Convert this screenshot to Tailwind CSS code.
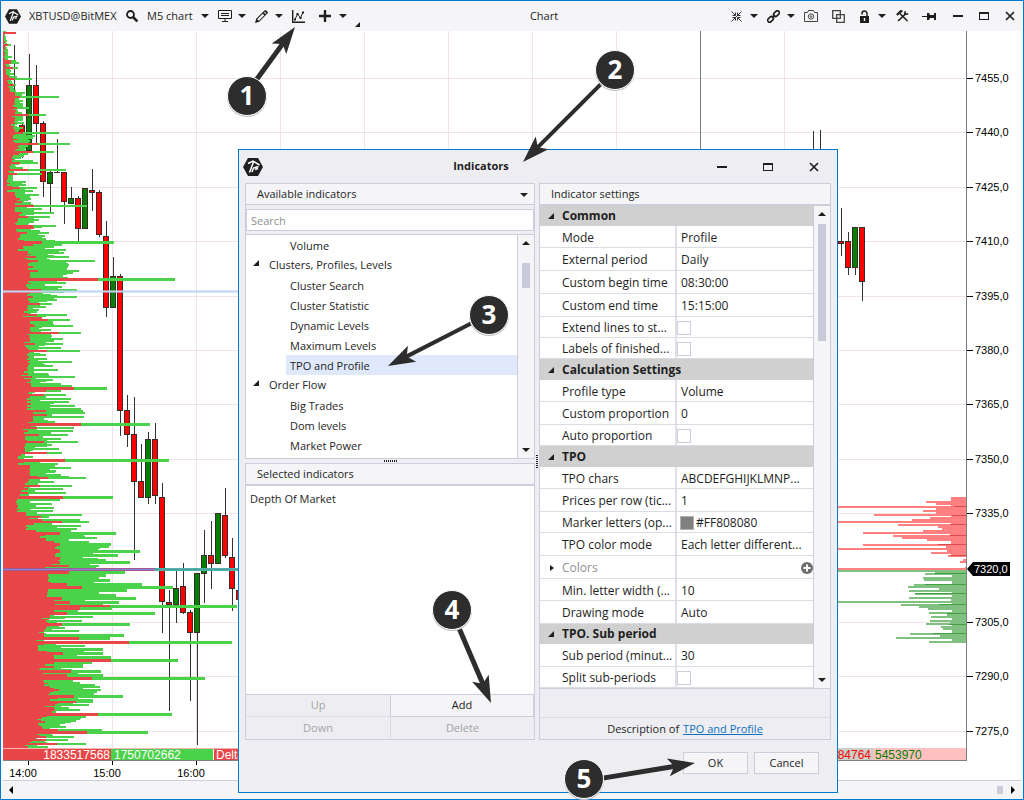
<!DOCTYPE html>
<html lang="en">
<head>
<meta charset="utf-8">
<title>XBTUSD@BitMEX Chart</title>
<script src="https://cdn.jsdelivr.net/npm/@tailwindcss/browser@4"></script>
</head>
<body class="font-['Open_Sans','Noto_Sans',sans-serif] text-[11px] text-[#1e1e1e]">
<svg class="hidden" aria-hidden="true">
  <symbol id="caret" viewBox="0 0 8 4"><path d="M0 0h8L4 4z" fill="currentColor"/></symbol>
  <symbol id="open" viewBox="0 0 6 6"><path d="M6 0v6H0z" fill="currentColor"/></symbol>
  <symbol id="logo" viewBox="0 0 20 18"><path d="M5 0h10l5 9-5 9H5L0 9z" fill="#1e1e1e"/><path d="M5 5.500 10 3l6.500 4M10.500 4 6.500 14.500M15.500 8.500l-5 1.500-1.500 4M15 10.500l-3 1" fill="none" stroke="#fff" stroke-width="1.500"/></symbol>
  <symbol id="min" viewBox="0 0 12 12"><path d="M1 5h10v2H1z" fill="currentColor"/></symbol>
  <symbol id="max" viewBox="0 0 12 12"><path d="M1 2h10v8H1zM2 4v5h8V4z" fill="currentColor" fill-rule="evenodd"/></symbol>
  <symbol id="close" viewBox="0 0 12 12"><path d="m2 2 8 8M10 2l-8 8" stroke="currentColor" stroke-width="1.700"/></symbol>
</svg>

<div class="relative flex min-h-screen flex-col border border-[#007acc] bg-[#f5f5f7]">
  <header class="flex h-[30px] items-center text-xs">
    <svg class="ml-1 h-[15px] w-4 shrink-0"><use href="#logo"/></svg>
    <span class="ml-2 w-[95px] text-[11px] whitespace-nowrap">XBTUSD@BitMEX</span>
    <button aria-label="Search instrument" class="flex w-4 justify-center"><svg class="size-3" viewBox="0 0 12 12" fill="none" stroke="currentColor"><circle cx="4.500" cy="4.500" r="3.500" stroke-width="1.800"/><path d="m7 7 4.500 4.500" stroke-width="2.600"/></svg></button>
    <button class="ml-[7px] w-12 text-left text-[11px] whitespace-nowrap">M5 chart</button>
    <button aria-label="Timeframe menu" class="flex w-5 justify-center"><svg class="h-1 w-2"><use href="#caret"/></svg></button>
    <button aria-label="Display" class="flex w-5 justify-center"><svg class="h-3 w-3.5" viewBox="0 0 14 12" fill="none" stroke="currentColor"><path d="M.5.5h13v8H.5zM3 3.500h8M3 5.500h8M7 9v2.500M4 11.500h6"/></svg></button>
    <button aria-label="Display menu" class="flex w-3.5 justify-center"><svg class="h-1 w-2"><use href="#caret"/></svg></button>
    <button aria-label="Draw" class="flex w-6 justify-center"><svg class="size-[13px]" viewBox="0 0 13 13"><path d="M0 13 1.200 8.800 9.500.5Q10.500-.3 11.600.8l.8.8q.9 1 0 2L4.200 11.800zM2.200 9.200l1.600 1.600L9.300 5.300 7.700 3.700zM9 2.600l1.500 1.500.8-.8-1.500-1.500z" fill="currentColor" fill-rule="evenodd"/></svg></button>
    <button aria-label="Drawing menu" class="flex w-3 justify-center"><svg class="h-1 w-2"><use href="#caret"/></svg></button>
    <button aria-label="Indicators" class="flex w-[26px] justify-center"><svg class="size-[13px]" viewBox="0 0 13 13" fill="none" stroke="currentColor"><path d="M.7 0v12.300H13" stroke-width="1.400"/><path d="M3 9.500 5.500 4l3 4L11 2"/><path d="M2 8.500h2v2H2zM4.500 3h2v2h-2zM7.500 7h2v2h-2zM10 1.500h2v2h-2z" fill="currentColor" stroke="none"/></svg></button>
    <button aria-label="Add" class="flex w-7 justify-center"><svg class="size-3" viewBox="0 0 12 12"><path d="M6 0v12M0 6h12" stroke="currentColor" stroke-width="2.400"/></svg></button>
    <button aria-label="Add menu" class="flex w-2 justify-center"><svg class="h-1 w-2"><use href="#caret"/></svg></button>
    <span class="flex w-5 justify-center self-end pb-1"><svg class="size-[5px]"><use href="#open"/></svg></span>
    <h1 class="flex-1 pr-2 text-center text-[11px]">Chart</h1>
    <button aria-label="Collapse" class="flex w-3.5 justify-center"><svg class="size-[11px]" viewBox="0 0 11 11" fill="none" stroke="currentColor"><path d="m.5.5 3.500 3.500M10.500.5.5 10.500M10.500 10.500 7 7M1.500 4.500h3v-3M6.500 1.500v3h3M1.500 6.500h3v3M9.500 6.500h-3v3" stroke-width=".9"/></svg></button>
    <button aria-label="Collapse menu" class="flex w-[22px] justify-center"><svg class="h-1 w-2"><use href="#caret"/></svg></button>
    <button aria-label="Link" class="flex w-4 justify-center"><svg class="size-[13px] shrink-0" viewBox="0 0 13 13" fill="none" stroke="currentColor" stroke-width="1.600"><rect x="6.200" y="1.600" width="6.500" height="4" rx="2" transform="rotate(-45 9.500 3.600)"/><rect x=".3" y="7.400" width="6.500" height="4" rx="2" transform="rotate(-45 3.500 9.400)"/><path d="m5 8 3-3"/></svg></button>
    <button aria-label="Link menu" class="flex w-5 justify-center"><svg class="h-1 w-2"><use href="#caret"/></svg></button>
    <button aria-label="Screenshot" class="flex w-5 justify-center"><svg class="h-3 w-3.5" viewBox="0 0 14 12" fill="none" stroke="#444"><path d="M.5 2.500h3l1-2h5l1 2h3v9H.5z"/><circle cx="7" cy="6.500" r="2.700"/><circle cx="7" cy="6.500" r=".8"/></svg></button>
    <button aria-label="Duplicate window" class="flex w-[34px] justify-center"><svg class="size-[13px]" viewBox="0 0 13 13" stroke="#444" stroke-width="1.300" fill="none"><path d="M.7.7h7.600v7.600H.7z"/><path d="M4.700 4.700h7.600v7.600H4.700z"/></svg></button>
    <button aria-label="Lock" class="flex w-[18px] justify-center"><svg class="h-[13px] w-[9px]" viewBox="0 0 9 13"><path d="M0 6h9v7H0zM3.800 8v3h1.400V8z" fill="currentColor" fill-rule="evenodd"/><path d="M7 6V3.500a2.500 2.500 0 0 0-5 0V4.500" fill="none" stroke="currentColor" stroke-width="1.500"/></svg></button>
    <button aria-label="Lock menu" class="flex w-[18px] justify-center"><svg class="h-1 w-2"><use href="#caret"/></svg></button>
    <button aria-label="Settings" class="flex w-[22px] justify-center"><svg class="h-3 w-[13px]" viewBox="0 0 13 12" fill="none" stroke="currentColor"><path d="M.8 5 4.800 1.200 6.500 1.500" stroke-width="2.200"/><path d="m3.800 3.500 7.700 7.500" stroke-width="1.600"/><path d="m2 11 6.500-6" stroke-width="1.700"/><path d="M9.300 1.200 8.600 4.600l3.600-.8" stroke-width="1.500"/></svg></button>
    <button aria-label="Pin" class="flex w-8 justify-center"><svg class="h-[9px] w-[15px]" viewBox="0 0 15 9"><path d="M0 4h5V1h2l1 2h4V1h2v7h-2V6H8L7 8H5V5H0z" fill="currentColor"/></svg></button>
    <button aria-label="Minimize" class="flex w-[26px] justify-center"><svg class="size-3"><use href="#min"/></svg></button>
    <button aria-label="Maximize" class="flex w-[26px] justify-center"><svg class="size-3"><use href="#max"/></svg></button>
    <button aria-label="Close" class="flex w-[26px] justify-center"><svg class="size-3"><use href="#close"/></svg></button>
  </header>

  <main class="mx-0.5 flex flex-1 border-b border-[#cccedb] bg-white">
    <svg class="block h-[749px] flex-1 overflow-hidden font-['Liberation_Sans',sans-serif] text-xs" role="img" aria-label="Price chart" shape-rendering="crispEdges">
      <g id="plot" transform="translate(-3 -31)"></g>
      <svg x="100%" overflow="visible"><g id="depth" transform="translate(-966 -31)"></g></svg>
    </svg>
    <svg id="axis" class="block h-[749px] w-[55px] shrink-0 font-['Liberation_Sans',sans-serif] text-[11px]" role="img" aria-label="Price axis"></svg>
  </main>
  <footer class="flex h-[18px] items-center justify-between px-2">
    <button aria-label="Scroll left"><svg class="h-2 w-1" viewBox="0 0 4 8"><path d="M4 0v8L0 4z"/></svg></button>
    <div class="flex items-center gap-2"><span class="h-2 w-1.5 bg-[#cccedb]"></span><button aria-label="Scroll right"><svg class="h-2 w-1" viewBox="0 0 4 8"><path d="M0 0v8l4-4z"/></svg></button></div>
  </footer>

  <section role="dialog" aria-labelledby="dlg" class="absolute top-[148px] left-[237px] flex h-[644px] w-[600px] flex-col border border-[#007acc] bg-[#eeeef2]">
    <div class="flex h-[33px] items-center">
      <svg class="ml-1 h-[18px] w-5"><use href="#logo"/></svg>
      <h2 id="dlg" class="flex-1 text-center font-bold">Indicators</h2>
      <button aria-label="Minimize dialog" class="flex w-[46px] justify-center"><svg class="size-3"><use href="#min"/></svg></button>
      <button aria-label="Maximize dialog" class="flex w-[46px] justify-center"><svg class="size-3"><use href="#max"/></svg></button>
      <button aria-label="Close dialog" class="flex w-[46px] justify-center"><svg class="size-3"><use href="#close"/></svg></button>
    </div>
    <div class="relative flex h-[557px] gap-1 px-1.5">
      <div class="flex min-w-0 flex-1 flex-col">
        <div class="border border-[#cccedb]">
          <button class="flex h-[21px] w-full items-center justify-between border-b border-[#cccedb] bg-[#f5f5f7] pt-px pr-1.5 pl-[11px]">Available indicators <svg class="h-1 w-2"><use href="#caret"/></svg></button>
          <input aria-label="Search indicators" placeholder="Search" class="mt-1 block h-[22px] w-full border border-[#cccedb] bg-white px-1 placeholder:text-[#8f8f93]">
          <div class="mt-[3px] flex h-[224px] border-t border-[#cccedb] bg-white">
            <ul id="tree" class="flex-1 leading-[22px]"></ul>
            <div class="flex w-[17px] flex-col items-center border-l border-[#cccedb] bg-[#f5f5f7] py-1.5">
              <svg class="h-1 w-2 rotate-180"><use href="#caret"/></svg>
              <div class="mt-[18px] h-[25px] w-2 bg-[#c8cad9]"></div>
              <svg class="mt-auto h-1 w-2"><use href="#caret"/></svg>
            </div>
          </div>
        </div>
        <div class="flex h-1 items-center justify-center"><span class="h-0.5 w-[13px] bg-[repeating-linear-gradient(90deg,#1e1e1e_0_1px,transparent_1px_2px)]"></span></div>
        <div class="flex flex-1 flex-col border border-[#cccedb]">
          <h3 class="flex h-[22px] items-center border-b-2 border-[#cccedb] bg-[#f5f5f7] pt-px pl-[11px]">Selected indicators</h3>
          <ul class="flex-1 bg-white px-1 pt-1 leading-[18px]"><li>Depth Of Market</li></ul>
          <div class="grid grid-cols-2 border-t border-[#cccedb] bg-[#eeeef2]">
            <button disabled class="h-[22px] border-b border-[#dddde6] text-[#a2a4a5]">Up</button>
            <button class="h-[22px] border border-t-0 border-[#cccedb] bg-[#f5f5f7]">Add</button>
            <button disabled class="h-[22px] text-[#a2a4a5]">Down</button>
            <button disabled class="h-[22px] border-l border-[#dddde6] text-[#a2a4a5]">Delete</button>
          </div>
        </div>
      </div>
      <span class="absolute top-[272px] left-[297px] h-[13px] w-0.5 bg-[repeating-linear-gradient(180deg,#1e1e1e_0_1px,transparent_1px_2px)]"></span>
      <div class="flex min-w-0 flex-1 flex-col border border-[#cccedb]">
        <h3 class="flex h-[22px] items-center border-b-2 border-[#cccedb] bg-[#f5f5f7] pt-px pl-[11px]">Indicator settings</h3>
        <div class="flex bg-white">
          <table class="flex-1 table-fixed border-collapse text-xs leading-4"><tbody id="props" class="block"></tbody></table>
          <div class="flex w-[17px] flex-col items-center border-l border-[#cccedb] bg-[#f5f5f7] py-1.5">
            <svg class="h-1 w-2 rotate-180"><use href="#caret"/></svg>
            <div class="mt-2 h-[117px] w-2 bg-[#c8cad9]"></div>
            <svg class="mt-auto h-1 w-2"><use href="#caret"/></svg>
          </div>
        </div>
        <div class="flex-1 border-t border-[#cccedb]"></div>
        <p class="flex h-[22px] items-center justify-center gap-1 border-t border-[#dddde6] pt-px">Description of <a href="#" class="text-[#0e70c0] underline">TPO and Profile</a></p>
      </div>
    </div>
    <div class="mt-3 flex justify-end gap-1.5 pr-[18px]">
      <button class="h-[22px] w-[65px] border border-[#cccedb] bg-[#f5f5f7]">OK</button>
      <button class="h-[22px] w-[65px] border border-[#cccedb] bg-[#f5f5f7]">Cancel</button>
    </div>
  </section>

  <svg class="pointer-events-none absolute -top-px -left-px h-[800px] w-[1024px] font-['Open_Sans',sans-serif] text-[26px] font-bold" aria-hidden="true">
    <defs><path id="head" d="M0 0-27-9-21 0-27 9z"/></defs>
    <g fill="#2d2d2d" stroke="#2d2d2d" stroke-linejoin="miter">
      <g transform="translate(295 27) rotate(-53.800)"><path d="M-65 0h45" stroke-width="5"/><use href="#head" stroke="none"/></g>
      <g transform="translate(523 162) rotate(135)"><path d="M-114 0h94" stroke-width="4"/><use href="#head" stroke="none"/></g>
      <g transform="translate(388 366) rotate(152.900)"><path d="M-96 0h76" stroke-width="4"/><use href="#head" stroke="none"/></g>
      <g transform="translate(491 703) rotate(66.900)"><path d="M-83 0h63" stroke-width="5"/><use href="#head" stroke="none"/></g>
      <g transform="translate(695 763) rotate(-9.300)"><path d="M-95 0h75" stroke-width="5"/><use href="#head" stroke="none"/></g>
    </g>
    <g fill="#c4c4c6"><circle cx="247" cy="97" r="20"/><circle cx="615" cy="71" r="20"/><circle cx="489" cy="316" r="20"/><circle cx="452" cy="611" r="20"/><circle cx="584" cy="780" r="20"/></g>
    <g fill="#2d2d2d" stroke="#fff"><circle cx="247" cy="96" r="19.500"/><circle cx="615" cy="70" r="19.500"/><circle cx="489" cy="315" r="19.500"/><circle cx="452" cy="610" r="19.500"/><circle cx="584" cy="779" r="19.500"/></g>
    <g fill="#fff" text-anchor="middle"><text x="247" y="105">1</text><text x="615" y="79">2</text><text x="489" y="324">3</text><text x="452" y="619">4</text><text x="584" y="788">5</text></g>
  </svg>
</div>

<script>
// Indicator tree: [label, kind]
const tree = [['Volume','leaf'],['Clusters, Profiles, Levels','group'],['Cluster Search','leaf'],['Cluster Statistic','leaf'],['Dynamic Levels','leaf'],['Maximum Levels','leaf'],['TPO and Profile','sel'],['Order Flow','group'],['Big Trades','leaf'],['Dom levels','leaf'],['Market Power','leaf']];
document.getElementById('tree').innerHTML = tree.map(([t, k]) => k === 'group'
  ? `<li class="flex h-5 items-center pl-[7px]"><svg class="-mt-1 mr-2.5 size-1.5"><use href="#open"/></svg>${t}</li>`
  : k === 'sel' ? `<li class="ml-10 h-5 bg-[#dfe9fb] pl-1">${t}</li>` : `<li class="h-5 pl-11">${t}</li>`).join('');

// Property grid: [height class, label, value]; a null value is a category, false a tick box
const A = 'h-5', B = 'h-[21px]', C = 'h-[22px]', D = 'h-[23px]';
const props = [[A,'Common',null],[C,'Mode','Profile'],[D,'External period','Daily'],[D,'Custom begin time','08:30:00'],[D,'Custom end time','15:15:00'],[B,'Extend lines to st...',false],[B,'Labels of finished...',false],[B,'Calculation Settings',null],[C,'Profile type','Volume'],[D,'Custom proportion','0'],[B,'Auto proportion',false],[B,'TPO',null],[C,'TPO chars','ABCDEFGHIJKLMNP...'],[D,'Prices per row (tic...','1'],[B,'Marker letters (op...','#FF808080'],[D,'TPO color mode','Each letter different...'],[D,'Colors',''],[C,'Min. letter width (...','10'],[D,'Drawing mode','Auto'],[A,'TPO. Sub period',null],[D,'Sub period (minut...','30'],[B,'Split sub-periods',false]];
document.getElementById('props').innerHTML = props.map(([h, label, v], i) => {
  if (v === null) return `<tr class="flex ${h} items-center bg-[#d0d0d0]"><th colspan="2" class="flex items-center font-bold"><svg class="mr-2 ml-2 size-1.5"><use href="#open"/></svg>${label}</th></tr>`;
  let cell = `<span class="pl-1">${v}</span>`;
  if (v === false) cell = `<input type="checkbox" id="p${i}" class="block size-3.5 appearance-none border border-[#cccedb] bg-white">`;
  if (label.startsWith('Marker')) cell = `<span class="mr-0.5 ml-[3px] size-3.5 border border-[#b0b0b0] bg-[#808080]"></span>${v}`;
  let name = v === false ? `<label for="p${i}">${label}</label>` : label;
  if (label === 'Colors') {
    name = `<svg class="-ml-3 mr-2 h-1.5 w-1" viewBox="0 0 4 6"><path d="M0 0v6l4-3z" fill="#1e1e1e"/></svg><span class="text-[#8f8f93]">Colors</span>`;
    cell = `<button aria-label="Add color" class="ml-auto"><svg class="block size-3" viewBox="0 0 12 12"><circle cx="6" cy="6" r="6" fill="#6d6d6d"/><path d="M6 2.500v7M2.500 6h7" stroke="#fff" stroke-width="2"/></svg></button>`;
  }
  return `<tr class="flex ${h} border-b border-[#dcdce6]"><th class="flex w-[137px] items-center overflow-hidden border-r-2 border-[#e0e0ea] pt-0.5 pl-[22px] font-normal whitespace-nowrap">${name}</th><td class="flex flex-1 items-center pt-0.5 whitespace-nowrap">${cell}</td></tr>`;
}).join('');

const rect = (x, y, w, h, f) => `<rect x="${x}" y="${y}" width="${w}" height="${h}" fill="${f}"/>`;
const RED = '#e84648', GREEN = '#4bd24b', GRID = '#f0e2e6';
let s = '';
for (let i = 0; i < 13; i++) s += `<rect x="3" y="${Math.round(78 + 54.4 * i)}" width="100%" height="1" fill="${GRID}"/>`;
for (let x = 28; x < 800; x += 84) s += rect(x, 31, 1, 730, x === 700 ? '#808080' : GRID);
// Candles: x, high, low, body top, body bottom, rising
const candles = [[14,45,113,100,100,0],[22,124,158,125,151,0],[29,54,151,85,151,1],[36,65,143,85,124,0],[43,121,197,123,182,0],[50,171,212,172,184,1],[57,139,173,172,173,0],[64,172,224,172,202,0],[71,187,204,198,204,1],[78,196,242,198,229,0],[85,188,229,188,229,1],[92,169,211,190,193,0],[99,190,237,192,235,0],[106,221,317,236,308,0],[113,257,308,276,308,1],[120,274,436,276,411,0],[127,395,447,410,435,0],[134,397,560,434,482,0],[141,444,498,481,498,0],[148,432,504,439,498,1],[155,423,504,439,496,0],[162,483,633,497,602,0],[169,590,711,602,605,0],[176,571,623,588,605,1],[183,563,614,586,613,0],[190,610,701,612,633,0],[197,573,745,573,633,1],[204,530,603,555,574,1],[211,521,589,555,564,0],[218,513,564,513,564,1],[225,488,558,515,556,0],[232,538,611,557,589,0],[239,590,600,590,600,0],[813,131,200,160,180,0],[820,130,200,160,180,0],[841,208,256,241,244,0],[848,232,275,241,268,0],[855,227,275,227,268,1],[862,227,301,227,282,0]];
for (const [x, hi, lo, t, b, up] of candles) {
  s += rect(x, hi, 1, lo - hi, '#333');
  if (b > t) s += rect(x - 3, t, 6, b - t, '#3c2a2a') + (b - t > 2 ? rect(x - 2, t + 1, 4, b - t - 2, up ? '#008000' : '#ff0000') : '');
}
// Volume profile outline: y, red edge, green edge
const base = [[31,4,5],[60,5,9],[90,9,15],[92,15,21],[125,13,19],[145,19,26],[165,10,15],[178,7,13],[192,15,29],[211,17,31],[232,18,38],[252,28,58],[272,30,62],[285,27,54],[297,28,50],[310,25,33],[323,30,50],[347,27,43],[365,28,38],[375,18,43],[380,31,45],[393,27,33],[412,33,68],[424,28,40],[437,25,47],[450,23,35],[456,18,20],[467,30,55],[480,28,38],[500,17,28],[513,26,37],[530,34,70],[543,55,92],[560,55,90],[573,48,98],[587,56,84],[603,50,95],[620,46,55],[630,44,46],[643,38,52],[655,54,90],[670,44,70],[687,50,88],[703,55,65],[717,42,74],[730,46,58],[745,28,35],[749,30,30]];
// Individual levels standing out of the outline: y, red edge, green edge (0 keeps the outline)
const bars = [[33,16,0],[45,8,11],[57,0,12],[61,11,16],[63,11,19],[68,13,18],[74,6,14],[77,9,17],[79,15,32],[85,14,16],[93,0,25],[97,20,59],[101,0,23],[104,0,23],[108,17,29],[113,0,22],[115,29,46],[119,0,22],[123,0,24],[128,0,23],[133,23,59],[136,0,35],[138,13,33],[141,0,30],[144,38,70],[148,0,26],[152,33,54],[154,0,28],[161,12,33],[163,20,38],[168,0,23],[170,28,66],[174,17,42],[182,0,26],[185,0,26],[188,20,37],[191,0,33],[195,0,39],[199,20,31],[202,22,0],[206,34,87],[209,0,42],[213,22,54],[217,28,50],[222,0,34],[226,33,56],[228,34,0],[233,27,49],[239,0,46],[242,42,114],[245,33,62],[250,0,66],[253,0,64],[257,36,69],[261,38,95],[264,0,68],[269,0,67],[271,38,79],[273,0,73],[279,98,175],[282,28,56],[287,0,47],[290,41,77],[292,41,64],[295,0,51],[297,33,77],[300,0,57],[304,40,52],[307,0,46],[315,37,67],[318,42,0],[320,48,70],[323,0,53],[326,35,73],[330,0,51],[333,59,81],[336,0,52],[339,0,63],[341,0,54],[344,35,63],[348,0,61],[351,47,80],[355,0,46],[359,0,47],[362,28,72],[366,0,53],[370,0,58],[374,0,48],[377,32,75],[380,0,53],[384,0,61],[386,0,72],[388,74,107],[391,46,61],[395,44,66],[399,0,71],[402,0,69],[406,0,75],[409,0,81],[411,46,83],[413,0,85],[415,47,0],[417,0,84],[421,0,48],[424,81,150],[428,37,74],[431,0,73],[435,39,68],[439,0,61],[442,44,78],[445,0,52],[449,0,59],[453,47,62],[457,0,33],[460,65,169],[464,0,58],[468,0,71],[472,0,55],[475,0,61],[477,38,69],[478,48,86],[482,0,54],[486,40,72],[489,0,63],[493,0,66],[497,63,113],[500,0,60],[504,0,52],[508,0,54],[511,0,53],[515,0,82],[517,41,0],[520,42,80],[522,62,89],[526,0,81],[529,0,67],[533,60,116],[537,40,85],[544,60,111],[548,0,100],[551,60,140],[555,0,118],[559,60,98],[562,60,130],[566,69,99],[572,69,125],[575,0,106],[580,0,110],[584,67,142],[587,82,173],[590,48,127],[595,47,116],[598,62,136],[602,70,119],[606,110,237],[608,80,112],[613,67,155],[617,0,93],[621,0,82],[624,62,130],[628,0,65],[631,0,79],[635,0,124],[638,79,110],[642,129,232],[646,0,85],[649,0,103],[653,63,103],[657,0,111],[660,111,178],[663,0,81],[667,0,83],[671,71,101],[675,67,103],[678,92,205],[682,0,66],[685,0,95],[687,0,97],[690,59,85],[693,0,76],[696,74,123],[700,0,93],[702,76,93],[705,0,89],[710,0,80],[714,98,172],[718,0,81],[722,45,71],[727,0,66],[730,58,102],[732,87,148],[737,0,74],[740,0,68],[744,57,86],[747,0,48]];
let noise = 7;
const rnd = () => (noise = (noise * 16807) % 2147483647) / 2147483647;
let k = 0;
for (let i = 0, y = 31; y < 748; i++, y = 31 + Math.floor(i * 1.81)) {
  while (base[k + 1][0] <= y) k++;
  const [a, b] = [base[k], base[k + 1]], f = (y - a[0]) / (b[0] - a[0]);
  const r = Math.round((a[1] + (b[1] - a[1]) * f) * (0.86 + rnd() * 0.26));
  const g = Math.round((a[2] + (b[2] - a[2]) * f) * (0.8 + rnd() * 0.4));
  s += rect(3, y, Math.max(g, r) - 3, 2, GREEN) + rect(3, y, r - 3, 2, RED);
}
for (const [y, r, g] of bars) {
  const n = base.findIndex(p => p[0] > y) - 1, h = g > 100 ? 3 : 2;
  s += rect(3, y - 1, (g || r) - 3, h, GREEN) + rect(3, y - 1, (r || base[n][1]) - 3, h, RED);
}
s += `<rect x="3" y="290" width="700" height="3" fill="#b8d0f4" opacity=".55"/><rect x="3" y="291" width="700" height="1" fill="#c3d6f3"/>`;
s += rect(3, 568, 152, 3, '#a8588f') + rect(3, 569, 152, 1, '#7f86dc') + rect(155, 568, 548, 3, '#4bb59f') + rect(155, 569, 548, 1, '#4f9db0');
s += rect(3, 748, 240, 1, '#f3b4b4') + rect(3, 749, 108, 11, RED) + rect(111, 749, 102, 11, GREEN) + rect(214, 749, 40, 11, RED);
s += `<g fill="#fff"><text x="110" y="759" text-anchor="end">1833517568</text><text x="114" y="759">1750702662</text><text x="216" y="759">Delta</text></g>`;
s += `<rect x="3" y="760" width="100%" height="1" fill="#808080"/>`;
[['14:00', 28], ['15:00', 112], ['16:00', 196]].forEach(([t, x]) => s += rect(x, 761, 1, 4, '#000') + `<text x="${x - 5}" y="777" text-anchor="middle" font-size="11">${t}</text>`);
document.getElementById('plot').innerHTML = s;

// Order book depth, drawn leftwards from the axis: y, left edge
const asks = [[497,951],[499,955],[501,926],[503,936],[506,700],[508,936],[510,923],[512,936],[514,874],[516,951],[517,930],[519,912],[521,700],[524,898],[526,938],[528,942],[530,923],[532,863],[534,950],[535,893],[537,902],[539,927],[541,958],[544,863],[546,946],[548,700],[550,947],[552,931],[554,952],[555,948],[559,963],[561,960],[567,965],[568,700]];
const bids = [[570,700],[572,935],[573,925],[575,957],[577,923],[579,924],[581,952],[584,914],[586,908],[588,939],[590,909],[593,915],[595,955],[597,909],[599,951],[601,700],[604,901],[606,919],[608,928],[610,952],[612,929],[614,947],[616,931],[618,953],[620,930],[622,950],[623,926],[626,941],[628,943],[631,962],[633,910],[635,940],[637,896],[639,955],[641,929]];
let d = rect(951, 497, 15, 58, '#ff8080') + rect(952, 570, 14, 73, '#80c080');
for (const [y, x] of asks) d += rect(x, y, 966 - x, 2, '#ff8080');
for (const [y, x] of bids) d += rect(x, y, 966 - x, 2, '#80c080');
for (const [y, x] of [[506,954],[515,952],[524,950],[535,950],[544,938],[555,951]]) d += rect(x, y, 966 - x, 1, '#dc4a4a');
for (const [y, x] of [[573,935],[584,925],[593,915],[604,939],[613,947],[624,949],[633,933]]) d += rect(x, y, 966 - x, 1, '#40a040');
d += rect(700, 748, 266, 12, '#ffc0c0') + rect(820, 748, 53, 12, '#c9cfc9');
d += `<text x="871" y="759" text-anchor="end" fill="#f00">84764</text><text x="875" y="759" fill="#008000">5453970</text>`;
document.getElementById('depth').innerHTML = d;

// Price axis
let a = rect(0, 0, 1, 730, '#808080');
for (let i = 0; i < 13; i++) {
  const y = Math.round(47 + 54.4 * i);
  if (i !== 9) a += rect(1, y, 6, 1, '#000') + `<text x="9" y="${y + 4}">${7455 - 15 * i},0</text>`;
}
a += `<path d="M1 538l6-7h37v14H7z"/><text x="8" y="542" fill="#fff">7320,0</text>`;
document.getElementById('axis').innerHTML = a;
</script>
</body>
</html>
